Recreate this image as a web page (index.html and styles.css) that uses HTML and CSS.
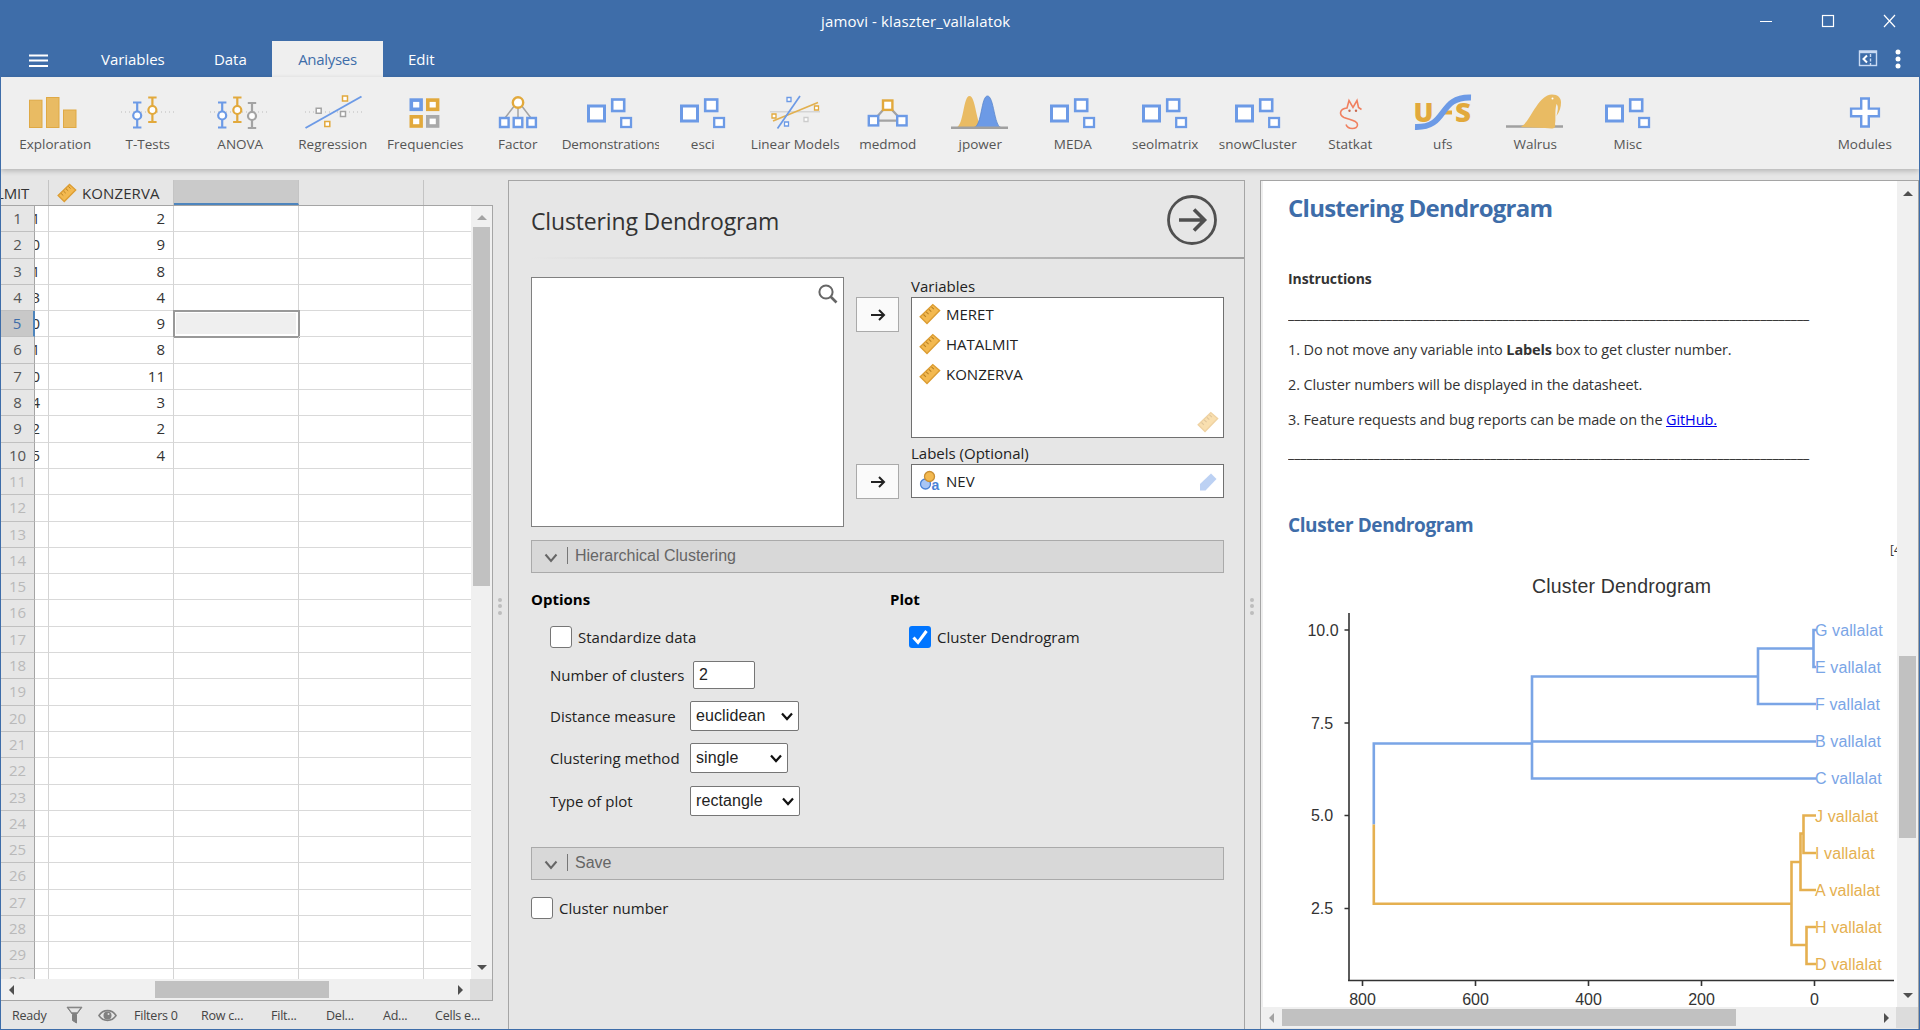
FILE: index.html
```html
<!DOCTYPE html>
<html lang="en">
<head>
<meta charset="utf-8">
<title>jamovi - klaszter_vallalatok</title>
<link rel="stylesheet" href="styles.css">
</head>
<body>
<svg class="defs" width="0" height="0" aria-hidden="true">
  <symbol id="ruler" viewBox="0 0 22 22">
    <path d="M1.2 13.8 13.8 1.6 20.6 7.6 8 20.4Z" fill="#f3b950" stroke="#dc9d33" stroke-width="1.4"/>
    <path d="M4.5 11.5l2.4 2.3M7.2 8.9l2.4 2.3M9.9 6.3l2.4 2.3M12.5 3.8l2.4 2.3" stroke="#b98225" stroke-width="1.1"/>
  </symbol>
  <symbol id="generic" viewBox="0 0 60 40">
    <g fill="#fff" stroke="#6c9ae6">
      <rect x="8.500" y="14" width="16" height="15" stroke-width="3"/>
      <rect x="32.200" y="7.500" width="12" height="11.500" stroke-width="2.600"/>
      <rect x="41.200" y="26" width="9.800" height="9" stroke-width="2.300"/>
    </g>
  </symbol>
  <symbol id="arrow" viewBox="0 0 16 16">
    <path d="M1 8H14M9 3l5 5-5 5" fill="none" stroke="#222" stroke-width="2"/>
  </symbol>
  <symbol id="chev" viewBox="0 0 14 10">
    <path d="M1.500 1.500 7 8l5.500-6.500" fill="none" stroke="#666" stroke-width="2"/>
  </symbol>
</svg>

<div class="window">
  <header class="titlebar">
    <div class="caption">
      <span class="caption-text">jamovi - klaszter_vallalatok</span>
      <svg class="win-controls" width="140" height="16" viewBox="0 0 140 16" fill="none" stroke="#fff" stroke-width="1.200">
        <path d="M0 8.500h12M124 2l11 12M135 2l-11 12"/><rect x="62.500" y="2.500" width="11" height="11"/>
      </svg>
    </div>
    <nav class="tabs">
      <svg class="burger" width="20" height="14" viewBox="0 0 20 14" stroke="#fff" stroke-width="2"><path d="M0 1.500h19M0 6.500h19M0 12h19"/></svg>
      <span class="tab t-var">Variables</span>
      <span class="tab t-data">Data</span>
      <span class="tab active">Analyses</span>
      <span class="tab t-edit">Edit</span>
      <svg class="tab-tools" width="44" height="20" viewBox="0 0 44 20">
        <g fill="none" stroke="#c9daf3" stroke-width="1.400"><rect x="1.500" y="2" width="17" height="14.500"/><path d="M1.500 3h17" stroke-width="2.400"/><path d="M12.500 5v12" stroke-dasharray="3 1.500"/><path d="M9 6.500 5.500 10 9 13.500" stroke="#fff" stroke-width="2"/></g>
        <g fill="#fff"><circle cx="40" cy="3" r="2.500"/><circle cx="40" cy="10" r="2.500"/><circle cx="40" cy="17" r="2.500"/></g>
      </svg>
    </nav>
  </header>

  <div class="ribbon">
    <div class="tool"><svg viewBox="0 0 60 40"><g fill="#e9bb63" stroke="#dfa945"><rect x="4.500" y="8.200" width="12.500" height="27.300"/><rect x="21.500" y="5.500" width="12.500" height="30"/><rect x="38.500" y="18" width="12.500" height="17.500"/></g></svg><span>Exploration</span></div>
    <div class="tool"><svg viewBox="0 0 60 40"><path d="M3 20H58" stroke="#bbb" stroke-dasharray="1 3"/><g fill="#fff" stroke-width="2.200"><g stroke="#6c9ae6"><path d="M19.200 10.500V35.500M15 10.500h8.400M15 35.500h8.400"/><circle cx="19.200" cy="23.500" r="4"/></g><g stroke="#e2a93c"><path d="M34.400 5.500V30M30.200 5.500h8.400M30.200 30h8.400"/><circle cx="34.400" cy="18" r="4"/></g></g></svg><span>T-Tests</span></div>
    <div class="tool"><svg viewBox="0 0 60 40"><path d="M0 20H58" stroke="#bbb" stroke-dasharray="1 3"/><g fill="#fff" stroke-width="2.200"><g stroke="#6c9ae6"><path d="M12.200 10.500V35.500M8 10.500h8.400M8 35.500h8.400"/><circle cx="12.200" cy="23.500" r="4"/></g><g stroke="#e2a93c"><path d="M27.300 5.500V30M23.100 5.500h8.400M23.100 30h8.400"/><circle cx="27.300" cy="18" r="4"/></g><g stroke="#a3a3a3"><path d="M42 11V36M37.800 11h8.400M37.800 36h8.400"/><circle cx="42" cy="24" r="4"/></g></g></svg><span>ANOVA</span></div>
    <div class="tool"><svg viewBox="0 0 60 40"><path d="M2 20H59" stroke="#bbb" stroke-dasharray="1 3"/><path d="M2.500 36 58.500 4.500" stroke="#6c9ae6" stroke-width="2"/><g fill="#fff" stroke-width="1.500"><path d="M39.500 4h5v5h-5zM21.800 29.500h5v5h-5z" stroke="#e2a93c"/><path d="M13.200 16.200h5v5h-5zM37.500 19.500h5v5h-5z" stroke="#a3a3a3"/></g></svg><span>Regression</span></div>
    <div class="tool"><svg viewBox="0 0 60 40"><g fill="#fff" stroke-width="3.600"><rect x="16.300" y="8.100" width="9.800" height="9.200" stroke="#6c9ae6"/><rect x="32.800" y="8.100" width="9.800" height="9.200" stroke="#e2a93c"/><rect x="16.300" y="24.800" width="9.800" height="9.200" stroke="#e2a93c"/><rect x="32.800" y="24.800" width="9.800" height="9.200" stroke="#a9a9a9"/></g></svg><span>Frequencies</span></div>
    <div class="tool"><svg viewBox="0 0 60 40"><path d="M27 13 17 26M30 14V26M33 13 43 26" stroke="#a3a3a3" stroke-width="1.500"/><g fill="#fff" stroke="#6c9ae6" stroke-width="2.400"><circle cx="30" cy="10.500" r="5.200" stroke="#e2a93c"/><path d="M12 26h8.600v9H12zM25.700 26h8.600v9h-8.600zM39.300 26h8.600v9h-8.600z"/></g></svg><span>Factor</span></div>
    <div class="tool"><svg viewBox="0 0 60 40"><use href="#generic"/></svg><span class="clipped">Demonstrations</span></div>
    <div class="tool"><svg viewBox="0 0 60 40"><use href="#generic"/></svg><span>esci</span></div>
    <div class="tool"><svg viewBox="0 0 60 40"><path d="M5 19.700H55" stroke="#d5d5d5" stroke-width="1.500"/><path d="M8 29 53 10.500" stroke="#e2b04f" stroke-width="1.700"/><path d="M12.500 36.500 35 4" stroke="#6c9ae6" stroke-width="1.700"/><g fill="#fff" stroke-width="1.300"><path d="M22 5.500h4v4h-4zM19.500 30h4v4h-4z" stroke="#6c9ae6"/><path d="M49.500 14h4v4h-4zM7 22h4v4H7z" stroke="#e2a93c"/><path d="M39 25.500h4v4h-4z" stroke="#ccc"/></g></svg><span>Linear Models</span></div>
    <div class="tool"><svg viewBox="0 0 60 40"><path d="M29.500 13 15.500 28.700H44Z" fill="none" stroke="#a3a3a3" stroke-width="2.200"/><g fill="#fff" stroke="#6c9ae6" stroke-width="2.400"><rect x="25" y="8.500" width="9.400" height="9.400" stroke="#e2a93c"/><rect x="10.800" y="24" width="9.400" height="9.400"/><rect x="39.200" y="24" width="9.400" height="9.400"/></g></svg><span>medmod</span></div>
    <div class="tool"><svg viewBox="0 0 60 40"><path d="M6 35.500C14 34 13 4 19.500 4S26 34 33 35.500Z" fill="#e9bb63"/><path d="M24 35.500C32 34 31 4 37.500 4S44 34 51 35.500Z" fill="#6c9ae6" stroke="#5b86cc" stroke-width=".8"/><path d="M1 35.700H58" stroke="#a0a0a0" stroke-width="2.400"/></svg><span>jpower</span></div>
    <div class="tool"><svg viewBox="0 0 60 40"><use href="#generic"/></svg><span>MEDA</span></div>
    <div class="tool"><svg viewBox="0 0 60 40"><use href="#generic"/></svg><span>seolmatrix</span></div>
    <div class="tool"><svg viewBox="0 0 60 40"><use href="#generic"/></svg><span>snowCluster</span></div>
    <div class="tool"><svg viewBox="0 0 60 40"><path d="M41.500 17.500 38.500 15.500 37 8.500 33 15.500 29 8.500 27 16C19 17 19 23 24 25.500 30 28 38 28.500 37.500 33 37 37.500 28 38 26 32.500" fill="none" stroke="#f08060" stroke-width="1.600"/><circle cx="29.500" cy="18.700" r="1.200" fill="#c96a50"/><circle cx="36" cy="18.700" r="1.200" fill="#c96a50"/></svg><span>Statkat</span></div>
    <div class="tool"><svg viewBox="0 0 60 40"><g class="ufs-letters"><text x="0.500" y="29.500" textLength="20" lengthAdjust="spacingAndGlyphs">U</text><text x="42" y="29.500" textLength="16" lengthAdjust="spacingAndGlyphs">S</text></g><path d="M29 20.500h10" stroke="#e2a93c" stroke-width="4"/><path d="M2 35C36 36 24 4.500 58 5.500" fill="none" stroke="#6c9ae6" stroke-width="5.800"/></svg><span>ufs</span></div>
    <div class="tool"><svg viewBox="0 0 60 40"><path d="M1 34.500H58" stroke="#a0a0a0" stroke-width="2.600"/><path d="M15 35C25 32 32 3 47 2.500 53 2.500 56 6 56 10.500 56 15 55 19 51.500 24 53 18 53.500 14 51.500 12 49.500 19 51 28 50 32 51 35 49 37 46.500 36.500L40 36Z" fill="#e9bb63"/><circle cx="47.500" cy="6.500" r="1" fill="#fff"/></svg><span>Walrus</span></div>
    <div class="tool"><svg viewBox="0 0 60 40"><use href="#generic"/></svg><span>Misc</span></div>
    <div class="tool modules"><svg viewBox="0 0 60 40"><path d="M26.200 6.500h7.600v10.100h10.100v7.600H33.800v10.300h-7.600V24.200H16.100v-7.600h10.100z" fill="#fff" stroke="#6c9ae6" stroke-width="2.400"/></svg><span>Modules</span></div>
  </div>

  <main class="panes">
    <section class="sheet">
      <div class="col-heads">
        <div class="ch ch0"><span>LMIT</span></div>
        <div class="ch ch1"><svg width="20" height="20"><use href="#ruler"/></svg>KONZERVA</div>
        <div class="ch sel"></div>
        <div class="ch"></div>
      </div>
      <div class="grid-frame">
        <div class="grid-top">
          <div class="grid">
            <div class="row"><b>1</b><i><u>1</u></i><span>2</span><span></span><span></span></div>
            <div class="row"><b>2</b><i><u>0</u></i><span>9</span><span></span><span></span></div>
            <div class="row"><b>3</b><i><u>1</u></i><span>8</span><span></span><span></span></div>
            <div class="row"><b>4</b><i><u>3</u></i><span>4</span><span></span><span></span></div>
            <div class="row current"><b>5</b><i><u>0</u></i><span>9</span><span class="cursor"></span><span></span></div>
            <div class="row"><b>6</b><i><u>1</u></i><span>8</span><span></span><span></span></div>
            <div class="row"><b>7</b><i><u>0</u></i><span>11</span><span></span><span></span></div>
            <div class="row"><b>8</b><i><u>4</u></i><span>3</span><span></span><span></span></div>
            <div class="row"><b>9</b><i><u>2</u></i><span>2</span><span></span><span></span></div>
            <div class="row"><b>10</b><i><u>5</u></i><span>4</span><span></span><span></span></div>
            <div class="row off"><b>11</b><i></i><span></span><span></span><span></span></div>
            <div class="row off"><b>12</b><i></i><span></span><span></span><span></span></div>
            <div class="row off"><b>13</b><i></i><span></span><span></span><span></span></div>
            <div class="row off"><b>14</b><i></i><span></span><span></span><span></span></div>
            <div class="row off"><b>15</b><i></i><span></span><span></span><span></span></div>
            <div class="row off"><b>16</b><i></i><span></span><span></span><span></span></div>
            <div class="row off"><b>17</b><i></i><span></span><span></span><span></span></div>
            <div class="row off"><b>18</b><i></i><span></span><span></span><span></span></div>
            <div class="row off"><b>19</b><i></i><span></span><span></span><span></span></div>
            <div class="row off"><b>20</b><i></i><span></span><span></span><span></span></div>
            <div class="row off"><b>21</b><i></i><span></span><span></span><span></span></div>
            <div class="row off"><b>22</b><i></i><span></span><span></span><span></span></div>
            <div class="row off"><b>23</b><i></i><span></span><span></span><span></span></div>
            <div class="row off"><b>24</b><i></i><span></span><span></span><span></span></div>
            <div class="row off"><b>25</b><i></i><span></span><span></span><span></span></div>
            <div class="row off"><b>26</b><i></i><span></span><span></span><span></span></div>
            <div class="row off"><b>27</b><i></i><span></span><span></span><span></span></div>
            <div class="row off"><b>28</b><i></i><span></span><span></span><span></span></div>
            <div class="row off"><b>29</b><i></i><span></span><span></span><span></span></div>
            <div class="row off"><b>30</b><i></i><span></span><span></span><span></span></div>
          </div>
          <div class="vbar"><s class="up dim"></s><div class="thumb"></div><s class="down"></s></div>
        </div>
        <div class="hbar"><s class="left"></s><div class="thumb"></div><s class="right"></s><div class="corner"></div></div>
      </div>
      <div class="status">
        <span class="s0">Ready</span>
        <svg class="s1" width="17" height="18" viewBox="0 0 17 18"><path d="M1 1.200h15L10.500 8.500V17L6.500 14.500V8.500Z" fill="#808080" stroke="#808080"/><path d="M2.800 2.300h11.400l-3 4H5.800z" fill="#e6e6e6"/></svg>
        <svg class="s2" width="19" height="13" viewBox="0 0 19 13"><path d="M1 6.500C5 0 14 0 18 6.500 14 13 5 13 1 6.500Z" fill="none" stroke="#808080" stroke-width="1.600"/><circle cx="9.500" cy="6.500" r="4" fill="#808080"/><circle cx="10.500" cy="5" r="1" fill="#ddd"/></svg>
        <span class="s3">Filters 0</span><span class="s4">Row c...</span><span class="s5">Filt...</span><span class="s6">Del...</span><span class="s7">Ad...</span><span class="s8">Cells e...</span>
      </div>
    </section>

    <div class="splitter"><i></i><i></i><i></i></div>

    <section class="options">
      <div class="opt-head">
        <h1>Clustering Dendrogram</h1>
        <svg width="52" height="52" viewBox="0 0 52 52" fill="none" stroke="#505050"><circle cx="26" cy="26" r="23.500" stroke-width="2.800"/><path d="M13 26H38M28 15.500 38.500 26 28 36.500" stroke-width="3.600"/></svg>
      </div>
      <div class="rule"></div>
      <div class="supplier-row">
        <div class="supplier"><svg width="22" height="22" viewBox="0 0 22 22" fill="none" stroke="#666" stroke-width="2"><circle cx="9" cy="9" r="6.600"/><path d="M13.500 13.500 19.500 19.500" stroke-width="2.600"/></svg></div>
        <div class="movers"><div class="mover"><svg width="16" height="16"><use href="#arrow"/></svg></div><div class="mover m2"><svg width="16" height="16"><use href="#arrow"/></svg></div></div>
        <div class="targets">
          <label class="tlabel">Variables</label>
          <div class="target big">
            <div class="item"><svg width="22" height="22"><use href="#ruler"/></svg>MERET</div>
            <div class="item"><svg width="22" height="22"><use href="#ruler"/></svg>HATALMIT</div>
            <div class="item"><svg width="22" height="22"><use href="#ruler"/></svg>KONZERVA</div>
            <svg class="hint" width="22" height="22"><use href="#ruler"/></svg>
          </div>
          <label class="tlabel l2">Labels (Optional)</label>
          <div class="target small">
            <div class="item"><svg width="22" height="22" viewBox="0 0 22 22"><circle cx="6.500" cy="14" r="5" fill="#a9c6f5" stroke="#4a82d6" stroke-width="1.300"/><circle cx="10.500" cy="6.500" r="5" fill="#f3b950" stroke="#c98f35" stroke-width="1.300"/><text class="nom" x="12.500" y="19.500">a</text></svg>NEV</div>
            <svg class="hint blue" width="22" height="22" viewBox="0 0 22 22"><path d="M3 13 14 2.500 19.500 8 8.500 19.500H3Z" fill="#6c9ae6"/></svg>
          </div>
        </div>
      </div>
      <div class="group g1"><svg width="14" height="10"><use href="#chev"/></svg><span>Hierarchical Clustering</span></div>
      <div class="two-col">
        <div class="col-a">
          <h2>Options</h2>
          <div class="check c1"><span class="box"></span>Standardize data</div>
          <div class="field f1"><label>Number of clusters</label><span class="input">2</span></div>
          <div class="field f2"><label>Distance measure</label><span class="select w1">euclidean<svg width="12" height="9" viewBox="0 0 12 9"><path d="M1 1.500 6 7l5-5.500" fill="none" stroke="#111" stroke-width="2.200"/></svg></span></div>
          <div class="field f3"><label>Clustering method</label><span class="select w2">single<svg width="12" height="9" viewBox="0 0 12 9"><path d="M1 1.500 6 7l5-5.500" fill="none" stroke="#111" stroke-width="2.200"/></svg></span></div>
          <div class="field f4"><label>Type of plot</label><span class="select w3">rectangle<svg width="12" height="9" viewBox="0 0 12 9"><path d="M1 1.500 6 7l5-5.500" fill="none" stroke="#111" stroke-width="2.200"/></svg></span></div>
        </div>
        <div class="col-b">
          <h2>Plot</h2>
          <div class="check c1"><span class="box on"><svg width="22" height="22" viewBox="0 0 22 22"><path d="M4.500 11.500 9 16.500 17.500 5" fill="none" stroke="#fff" stroke-width="3"/></svg></span>Cluster Dendrogram</div>
        </div>
      </div>
      <div class="group"><svg width="14" height="10"><use href="#chev"/></svg><span>Save</span></div>
      <div class="check save"><span class="box"></span>Cluster number</div>
    </section>

    <div class="splitter sp2"><i></i><i></i><i></i></div>

    <section class="results">
      <div class="res-top">
        <div class="doc">
          <h1>Clustering Dendrogram</h1>
          <h3>Instructions</h3>
          <p class="line">_____________________________________________________________________________________</p>
          <p class="p1">1. Do not move any variable into <strong>Labels</strong> box to get cluster number.</p>
          <p class="p2">2. Cluster numbers will be displayed in the datasheet.</p>
          <p class="p3">3. Feature requests and bug reports can be made on the <a href="#">GitHub.</a></p>
          <p class="line line2">_____________________________________________________________________________________</p>
          <h2>Cluster Dendrogram</h2>
          <div class="cite">[4]</div>
          <svg class="plot" width="609" height="447" viewBox="1288 560 609 447">
            <text class="ptitle" x="1621.500" y="593" text-anchor="middle" textLength="179">Cluster Dendrogram</text>
            <path d="M1349 613V981M1348 980.500H1894M1344.500 630h4.500M1344.500 723h4.500M1344.500 815.500h4.500M1344.500 908.500h4.500M1362.500 981v5M1475.500 981v5M1588.500 981v5M1701.500 981v5M1814.500 981v5" stroke="#333" stroke-width="1.600" fill="none"/>
            <g class="tick" text-anchor="middle">
              <text x="1323" y="635.500">10.0</text><text x="1322" y="728.500">7.5</text><text x="1322" y="821">5.0</text><text x="1322" y="914">2.5</text>
              <text x="1362.500" y="1005">800</text><text x="1475.500" y="1005">600</text><text x="1588.500" y="1005">400</text><text x="1701.500" y="1005">200</text><text x="1814.500" y="1005">0</text>
            </g>
            <g fill="none" stroke-width="2.600">
              <path stroke="#7aa5e6" d="M1816 630H1813.500V667H1816M1813.500 648.500H1758V704H1816M1758 676.500H1532V778.500H1816M1532 741.500H1816M1532 743.500H1373.800V824.500"/>
              <path stroke="#e5b050" d="M1373.800 824.500V903.700H1791.500M1816 815.500H1803.500V853H1816M1803.500 833.500H1800.500V890H1816M1800.500 862H1791.500V945H1806.500M1816 927H1806.500V964H1816"/>
            </g>
            <g class="leaf a"><text x="1815" y="636">G vallalat</text><text x="1815" y="673">E vallalat</text><text x="1815" y="710">F vallalat</text><text x="1815" y="747">B vallalat</text><text x="1815" y="784">C vallalat</text></g>
            <g class="leaf b"><text x="1815" y="822">J vallalat</text><text x="1815" y="859">I vallalat</text><text x="1815" y="896">A vallalat</text><text x="1815" y="933">H vallalat</text><text x="1815" y="970">D vallalat</text></g>
          </svg>
        </div>
        <div class="vbar"><s class="up"></s><div class="thumb"></div><s class="down"></s></div>
      </div>
      <div class="hbar"><s class="left dim"></s><div class="thumb"></div><s class="right"></s><div class="corner"></div></div>
    </section>
  </main>
</div>
</body>
</html>
```

FILE: styles.css
```css
* { box-sizing: border-box; }
body { margin: 0; font-family: "Open Sans", "Noto Sans", sans-serif; color: #333; font-size: 15px; letter-spacing: 0; overflow: hidden; }
h1, h2, h3, p { margin: 0; font-weight: 400; }
svg { display: block; flex: none; }
.defs { position: absolute; }
.window { width: 1920px; height: 1030px; display: flex; flex-direction: column; background: #e6e6e6; border: 1px solid #3e6da9; border-top: 0; overflow: hidden; }

/* title bar and tabs */
.titlebar { height: 77px; background: #3e6da9; color: #fff; flex: none; }
.caption { height: 41px; display: flex; align-items: center; }
.caption-text { width: 194px; margin-left: 820px; white-space: nowrap; letter-spacing: 0.13px; }
.win-controls { margin-left: 745px; }
.tabs { display: flex; height: 36px; align-items: center; }
.burger { margin: 4px 0 0 28px; }
.tab { line-height: 37px; height: 36px; white-space: nowrap; letter-spacing: -0.050px; }
.t-var { margin-left: 52px; width: 113px; }
.t-data { width: 58px; }
.tab.active { width: 111px; background: #efefef; color: #3e6da9; text-align: center; letter-spacing: -0.300px; }
.t-edit { margin-left: 25px; }
.tab-tools { margin-left: auto; margin-right: 17px; }

/* ribbon */
.ribbon { height: 92px; background: #efefef; display: flex; padding: 15px 0 0 8px; flex: none; box-shadow: 0 2px 5px rgba(0,0,0,.22); z-index: 1; }
.tool { width: 92.500px; display: flex; flex-direction: column; align-items: center; flex: none; }
.tool svg { width: 60px; height: 40px; }
.tool span { font-size: 13.500px; line-height: 22px; margin-top: 1px; color: #555; white-space: nowrap; }
.tool .clipped { width: 97px; overflow: hidden; flex: none; letter-spacing: -0.200px; }
.modules { margin-left: auto; margin-right: 8px; }
.ufs-letters text { font: 800 27px "Open Sans", sans-serif; fill: #e2a93c; }

.panes { display: flex; flex: 1; padding-top: 11px; min-height: 0; }

/* spreadsheet */
.sheet { width: 492px; flex: none; display: flex; flex-direction: column; }
.col-heads { height: 25px; display: flex; color: #333; }
.ch { width: 125px; border-right: 1px solid #c4c4c4; display: flex; align-items: center; gap: 5px; line-height: 24px; height: 25px; letter-spacing: .1px; }
.ch0 { width: 48px; overflow: hidden; justify-content: flex-end; padding-right: 19px; letter-spacing: -0.200px; }
.ch1 { padding-left: 8px; }
.ch.sel { background: #cacaca; border-bottom: 2px solid #4e85bd; }
.grid-frame { border: 1px solid #a5a5a5; border-left: 0; height: 796px; display: flex; flex-direction: column; }
.grid-top { display: flex; height: 773px; }
.grid { flex: 1; background: #fff; overflow: hidden; }
.row { display: flex; height: 26.300px; line-height: 24.500px; }
.row b { width: 34px; flex: none; font-weight: 400; text-align: center; background: #e6e6e6; border-right: 1px solid #a5a5a5; border-bottom: 1px solid #c0c0c0; color: #555; }
.row i { width: 14px; flex: none; font-style: normal; border-right: 1px solid #d4d4d4; border-bottom: 1px solid #d9d9d9; overflow: hidden; display: flex; justify-content: flex-end; padding-right: 8px; }
.row u { text-decoration: none; }
.row span { width: 125px; flex: none; border-right: 1px solid #d4d4d4; border-bottom: 1px solid #d9d9d9; text-align: right; padding-right: 8px; }
.row::after { content: ""; flex: 1; border-bottom: 1px solid #d9d9d9; }
.row.off b { color: #b9b9b9; }
.row.current b { background: #c8c8c8; color: #3e6da9; border-right: 2px solid #4e85bd; }
.row .cursor { background: #efefef; box-shadow: 0 0 0 2px #fff inset; outline: 2px solid #999; outline-offset: -1px; border-color: transparent; }

/* scroll bars */
.vbar { width: 21px; background: #f0f0f0; display: flex; flex-direction: column; align-items: center; flex: none; }
.vbar .thumb { width: 17px; background: #c1c1c1; }
.hbar { height: 21px; background: #f0f0f0; display: flex; align-items: center; flex: none; }
.hbar .thumb { height: 17px; background: #c1c1c1; }
.corner { width: 22px; height: 21px; background: #dcdcdc; margin-left: auto; }
s { display: block; border: 5px solid transparent; width: 0; height: 0; flex: none; }
s.up { border-bottom-color: #505050; border-top: 0; }
s.down { border-top-color: #505050; border-bottom: 0; margin-top: auto; }
s.left { border-right-color: #505050; border-left: 0; }
s.right { border-left-color: #505050; border-right: 0; }
s.up.dim { border-bottom-color: #a3a3a3; }
s.left.dim { border-right-color: #a3a3a3; }
.sheet .up { margin-top: 9px; }
.sheet .vbar .thumb { height: 359px; margin-top: 7px; }
.sheet .down { margin-bottom: 9px; }
.sheet .hbar .left { margin-left: 8px; }
.sheet .hbar .thumb { width: 174px; margin-left: 141px; }
.sheet .hbar .right { margin-left: 129px; }

.status { display: flex; align-items: center; height: 28px; font-size: 12.500px; letter-spacing: -0.220px; color: #444; white-space: nowrap; }
.status > * { flex: none; }
.s0 { width: 54px; padding-left: 11px; }
.s1 { margin-left: 11px; }
.s2 { margin-left: 15px; }
.s3 { margin-left: 17px; width: 67px; }
.s4 { width: 70px; }
.s5 { width: 55px; }
.s6 { width: 57px; }
.s7 { width: 52px; }

.splitter { width: 15px; flex: none; display: flex; flex-direction: column; gap: 2px; padding: 417.500px 0 0 5px; }
.splitter i { width: 4px; height: 4px; border-radius: 50%; background: #bdbdbd; margin-bottom: .500px; }

/* analysis options */
.options { width: 737px; flex: none; border: 1px solid #a5a5a5; border-bottom: 0; padding-left: 22px; color: #222; }
.opt-head { height: 76px; display: flex; justify-content: space-between; padding: 13px 26px 0 0; }
.opt-head h1 { font-size: 23px; line-height: 54px; color: #333; letter-spacing: -0.150px; }
.rule { height: 2px; background: linear-gradient(90deg, #e6e6e6, #a0a0a0); }
.supplier-row { display: flex; padding-top: 18px; height: 281px; }
.supplier { width: 313px; height: 250px; background: #fff; border: 1px solid #808080; display: flex; justify-content: flex-end; padding: 5px 4px; }
.movers { padding: 20px 12px 0; }
.mover { width: 43px; height: 35px; background: #fafafa; border: 1px solid #aaa; display: flex; align-items: center; justify-content: center; }
.m2 { margin-top: 132px; }
.targets { width: 313px; }
.tlabel { display: block; line-height: 18px; height: 20px; }
.target { background: #fff; border: 1px solid #707070; position: relative; }
.target.big { height: 141px; padding-top: 1px; }
.target.small { height: 34px; padding-top: 1px; }
.l2 { margin-top: 6px; }
.item { display: flex; align-items: center; gap: 5px; height: 30px; line-height: 30px; padding-left: 7px; }
.hint { position: absolute; right: 4px; bottom: 4px; opacity: .45; }
.nom { font: bold 14px "Liberation Sans", sans-serif; fill: #4a82d6; }
.group { width: 693px; height: 33px; background: #d8d8d8; border: 1px solid #aaa; display: flex; align-items: center; padding-left: 12px; font: 16px "Liberation Sans", Arial, sans-serif; color: #666; }
.group svg { margin-top: 3px; }
.group span { border-left: 1px solid #777; margin-left: 9px; padding-left: 7px; line-height: 17px; margin-bottom: 2px; }
.two-col { display: flex; height: 274px; padding-top: 16px; }
.two-col h2 { font-size: 15px; font-weight: 700; line-height: 20px; color: #000; }
.col-a { width: 359px; }
.check { display: flex; align-items: center; gap: 6px; line-height: 22px; height: 22px; }
.c1 { margin: 17px 0 0 19px; }
.box { width: 22px; height: 22px; border: 1px solid #767676; border-radius: 3px; background: #fff; flex: none; }
.box.on { background: #0075ff; border: 0; }
.field { display: flex; align-items: center; padding-left: 19px; height: 30px; }
.field label { width: 140px; white-space: nowrap; }
.f1 { margin-top: 12px; }
.f1 label { width: 143px; }
.f2 { margin-top: 11px; }
.f3 { margin-top: 12px; }
.f4 { margin-top: 13px; }
.input, .select { background: #fff; border: 1px solid #767676; font: 16px "Liberation Sans", Arial, sans-serif; color: #222; height: 30px; display: flex; align-items: center; border-radius: 2px; padding-left: 5px; }
.select { letter-spacing: .1px; justify-content: space-between; padding-right: 5px; }
.input { width: 62px; height: 28px; }
.w1 { width: 109px; }
.w2 { width: 98px; }
.w3 { width: 110px; }
.check.save { margin-top: 17px; }

/* results */
.results { width: 659px; flex: none; border: 1px solid #a5a5a5; display: flex; flex-direction: column; border-bottom: 0; }
.res-top { display: flex; height: 826px; }
.doc { flex: 1; background: #fff; border-left: 2px solid #eee; padding-left: 25px; overflow: hidden; min-width: 0; color: #333; font-size: 14px; }
.doc h1 { font-size: 24px; font-weight: 700; color: #3e6da9; line-height: 30px; margin-top: 12px; letter-spacing: -0.740px; }
.doc h3 { font-size: 14px; font-weight: 700; line-height: 20px; margin-top: 46px; letter-spacing: -0.100px; }
.doc p { line-height: 20px; white-space: nowrap; font-size: 14.500px; letter-spacing: -0.120px; }
.doc .line { width: 523px; overflow: hidden; margin-top: 15px; font-size: 14px; letter-spacing: 0; }
.doc .p1 { margin-top: 16px; }
.doc .p2, .doc .p3 { margin-top: 15px; }
.doc a { color: #0000ee; }
.doc .line2 { margin-top: 13px; }
.doc h2 { font-size: 19px; font-weight: 700; color: #3e6da9; line-height: 26px; margin-top: 49px; letter-spacing: -0.400px; }
.cite { font-size: 12px; line-height: 16px; padding-left: 602px; white-space: nowrap; margin-top: 4px; }
.plot { margin-top: 2px; font-family: "Liberation Sans", Arial, sans-serif; }
.ptitle { font-size: 19.500px; fill: #333; }
.tick { font-size: 16px; fill: #333; }
.leaf { font-size: 16px; letter-spacing: .1px; }
.leaf.a { fill: #7aa5e6; }
.leaf.b { fill: #e5b050; }
.results .up { margin-top: 10px; }
.results .vbar .thumb { height: 182px; margin-top: 460px; }
.results .down { margin-bottom: 9px; }
.results .hbar .left { margin-left: 8px; }
.results .hbar .thumb { width: 454px; margin-left: 8px; }
.results .hbar .right { margin-left: 148px; }
```
